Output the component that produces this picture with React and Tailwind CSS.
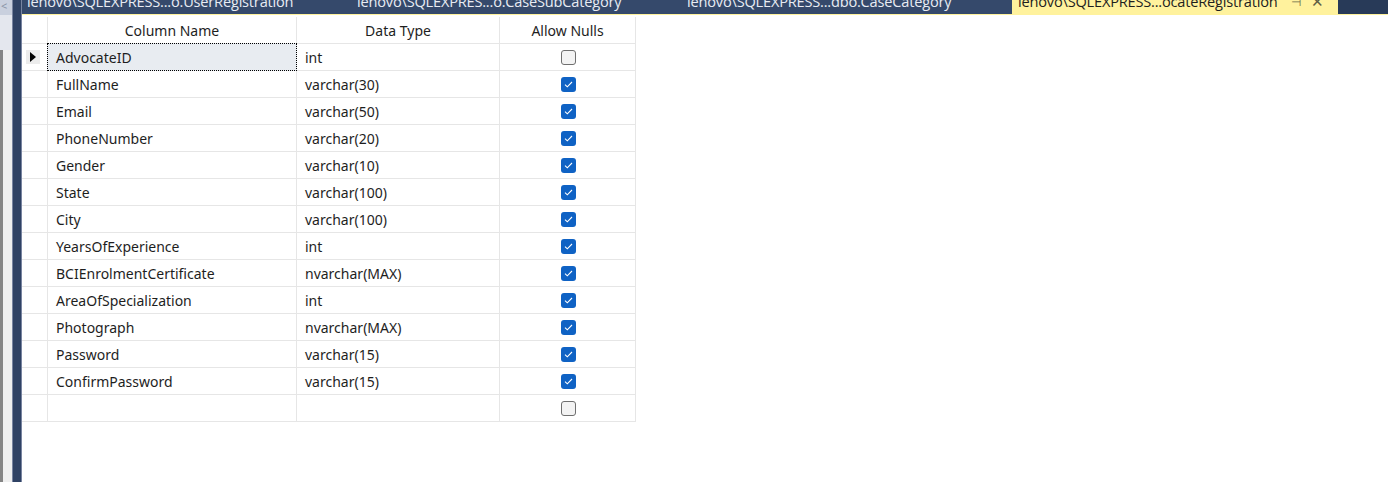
import React from 'react';

const rows = [
  ['AdvocateID', 'int', false],
  ['FullName', 'varchar(30)', true],
  ['Email', 'varchar(50)', true],
  ['PhoneNumber', 'varchar(20)', true],
  ['Gender', 'varchar(10)', true],
  ['State', 'varchar(100)', true],
  ['City', 'varchar(100)', true],
  ['YearsOfExperience', 'int', true],
  ['BCIEnrolmentCertificate', 'nvarchar(MAX)', true],
  ['AreaOfSpecialization', 'int', true],
  ['Photograph', 'nvarchar(MAX)', true],
  ['Password', 'varchar(15)', true],
  ['ConfirmPassword', 'varchar(15)', true],
  ['', '', false],
];

const tabs = [
  'lenovo\\SQLEXPRESS...o.UserRegistration',
  'lenovo\\SQLEXPRES...o.CaseSubCategory',
  'lenovo\\SQLEXPRESS...dbo.CaseCategory',
];

const Check = ({ on }) =>
  on ? (
    <span className="w-[15px] h-[15px] rounded-[3px] bg-[#0f62c4] flex items-center justify-center">
      <svg width="9" height="7" viewBox="0 0 9 7">
        <path d="M1 3.6 L3.3 5.8 L8 1" fill="none" stroke="white" strokeWidth="1.1" />
      </svg>
    </span>
  ) : (
    <span className="w-[15px] h-[15px] rounded-[3px] bg-[#f3f3f3] border border-[#6f6f6f]" />
  );

const App = () => {
  return (
    <div className="w-[1388px] h-[482px] bg-white flex overflow-hidden font-['Noto_Sans',sans-serif] text-[14px] text-[#1e1e1e]">
      {/* Left dock strip */}
      <div className="w-[12px] flex flex-col shrink-0">
        <div className="h-[15px] bg-[#c9d0de] text-[#8a93a6] text-[11px] leading-[12px] pl-[1px]">&lt;</div>
        <div className="h-[35px] bg-[#e4e7ee]" />
        <div className="flex-1 flex">
          <div className="w-[3px] bg-[#858585]" />
          <div className="flex-1 bg-[#efefef]" />
        </div>
      </div>
      <div className="w-[10px] shrink-0 bg-[#2f4264] border-l border-r border-[#7884a0]" />

      <div className="flex-1 flex flex-col">
        {/* Tab bar */}
        <div className="h-[15px] flex bg-[#35496b] border-b border-[#fff29d] text-[14.6px] leading-[15px] font-['Open_Sans',sans-serif] tracking-[-0.2px]">
          {tabs.map((t) => (
            <div key={t} className="w-[330px] pl-[5px] text-[#e8ecf3] overflow-hidden whitespace-nowrap -mt-[6px]">
              {t}
            </div>
          ))}
          <div className="w-[326px] bg-[#fff29d] pl-[6px] flex items-start text-[#1e1e1e] whitespace-nowrap -mt-[6px]">
            <span>lenovo\SQLEXPRESS...ocateRegistration</span>
            <span className="ml-[14px] text-[#6d6d4a] text-[12px]">⊣</span>
            <span className="ml-[10px] text-[#5f5f45] text-[15px]">✕</span>
          </div>
          <div className="flex-1 bg-[#283a58]" />
        </div>

        {/* Grid */}
        <div className="pt-[2px]">
          <div className="grid grid-cols-[26px_249px_203px_136px] w-fit">
            <div className="h-[27px] border-r border-b border-[#e6e6e6]" />
            <div className="h-[27px] border-r border-b border-[#e6e6e6] flex items-center justify-center">Column Name</div>
            <div className="h-[27px] border-r border-b border-[#e6e6e6] flex items-center justify-center">Data Type</div>
            <div className="h-[27px] border-r border-b border-[#e6e6e6] flex items-center justify-center">Allow Nulls</div>
            {rows.map(([name, type, on], i) => (
              <React.Fragment key={i}>
                <div className="h-[27px] border-r border-b border-[#e6e6e6] flex items-center pl-[4px]">
                  {i === 0 && (
                    <span className="w-[14px] h-[14px] bg-[#ececec] flex items-center justify-center">
                      <svg width="6" height="10" viewBox="0 0 6 10">
                        <path d="M0 0 L6 5 L0 10 Z" fill="#000" />
                      </svg>
                    </span>
                  )}
                </div>
                <div
                  className={
                    i === 0
                      ? 'border border-dotted border-black bg-[#e8ecf1] -mt-[1px] h-[28px] flex items-center pl-[8px] -ml-[1px]'
                      : 'h-[27px] border-r border-b border-[#e6e6e6] flex items-center pl-[8px]'
                  }
                >
                  {name}
                </div>
                <div className="h-[27px] border-r border-b border-[#e6e6e6] flex items-center pl-[8px]">{type}</div>
                <div className="h-[27px] border-r border-b border-[#e6e6e6] flex items-center justify-center pl-[1px]">
                  <Check on={on} />
                </div>
              </React.Fragment>
            ))}
          </div>
        </div>
      </div>
    </div>
  );
};

export default App;
